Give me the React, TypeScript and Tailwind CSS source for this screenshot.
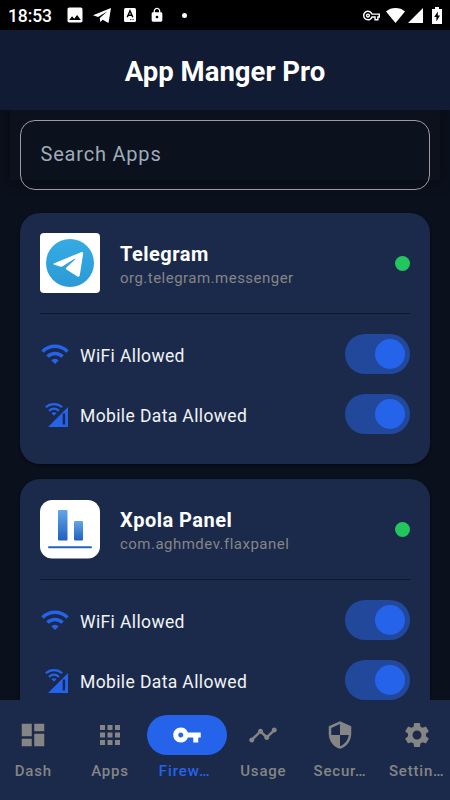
import type { ReactNode } from 'react';
import {
  MdApps,
  MdDashboard,
  MdImage,
  MdLock,
  MdOutlineVpnKey,
  MdSecurity,
  MdSettings,
  MdTimeline,
  MdVpnKey,
  MdWifi,
} from 'react-icons/md';

const tabs = [
  { label: 'Dash', icon: MdDashboard },
  { label: 'Apps', icon: MdApps },
  { label: 'Firew…', icon: MdVpnKey, active: true },
  { label: 'Usage', icon: MdTimeline },
  { label: 'Secur…', icon: MdSecurity },
  { label: 'Settin…', icon: MdSettings },
];

function StatusBar() {
  return (
    <div className="flex h-[30px] shrink-0 items-center bg-black text-white">
      <span className="ml-2 w-[56px] pt-[2px] text-[17.5px] leading-[29px] font-medium tracking-[-0.1px]">18:53</span>
      <MdImage className="ml-[1px] h-5 w-5" />
      <svg className="ml-2 h-[15px] w-[18px]" viewBox="0 0 18 15" fill="currentColor">
        <path d="M0 7.2 18 0 15.5 15 9.8 11.8 7.2 14 6.8 10 14.5 3.2 5 9z" />
      </svg>
      <svg className="ml-[13px] h-[14px] w-3" viewBox="0 0 12 14">
        <rect width="12" height="14" rx="1.5" fill="#fff" />
        <path d="M3.2 9.2 6 2.8l2.8 6.4M4.2 7.2h3.6" fill="none" stroke="#000" strokeWidth="1.4" />
        <path d="M6 11.6h4" stroke="#000" strokeWidth="0.8" strokeDasharray="1 0.6" />
      </svg>
      <MdLock className="ml-[13px] h-4 w-4" />
      <span className="ml-[17px] h-[5px] w-[5px] rounded-full bg-white" />
      <MdOutlineVpnKey className="ml-auto h-[17px] w-[17px]" />
      <svg className="ml-[6px] h-[15px] w-[19px]" viewBox="0 0 19 15" fill="currentColor">
        <path d="M9.5 15 0 3.4C5.2-1.1 13.8-1.1 19 3.4z" />
      </svg>
      <svg className="ml-[3px] h-[15px] w-[15px]" viewBox="0 0 15 15" fill="currentColor">
        <path d="M15 0v15H0z" />
      </svg>
      <svg className="mr-2 ml-[9px] h-[17px] w-[10px]" viewBox="0 0 10 17">
        <path d="M3 0h4v2h3v15H0V2h3z" fill="#fff" />
        <path d="M5.8 4.5 2.2 10h2.2v4.5L8 8.5H5.8z" fill="#000" />
      </svg>
    </div>
  );
}

function TelegramLogo() {
  return (
    <svg className="h-[60px] w-[60px]" viewBox="0 0 60 60">
      <defs>
        <linearGradient id="tg" x1="0" y1="0" x2="0" y2="1">
          <stop offset="0" stopColor="#36abe3" />
          <stop offset="1" stopColor="#2b9ad5" />
        </linearGradient>
      </defs>
      <rect width="60" height="60" rx="4" fill="#fff" />
      <circle cx="30" cy="30" r="24" fill="url(#tg)" />
      <path
        d="M14.3 30.3 41 19.2c1.5-.5 2.4.2 2.1 2L39.8 42c-.3 1.8-1.4 2.2-2.8 1.3l-10.2-6.6c-1.1-.8-1.1-1.6-.1-2.5l8.3-7.6c.7-.8 0-1.1-.9-.5l-11 7c-1 .6-2 .7-3.2.3l-5.4-1.6c-1.3-.5-1.3-1-.2-1.5z"
        fill="#fff"
      />
    </svg>
  );
}

function XpolaLogo() {
  return (
    <svg className="h-[60px] w-[60px]" viewBox="0 0 60 60">
      <defs>
        <linearGradient id="bar" x1="0" y1="0" x2="0" y2="1">
          <stop offset="0" stopColor="#64a6e6" />
          <stop offset="1" stopColor="#1e60bf" />
        </linearGradient>
      </defs>
      <rect y="1" width="60" height="58.5" rx="12" fill="#fff" />
      <rect x="18" y="11" width="9.5" height="30.5" rx="1" fill="url(#bar)" />
      <rect x="34" y="22" width="9" height="19.5" rx="1" fill="url(#bar)" />
      <rect x="8" y="47.3" width="44" height="2" rx="1" fill="#2563c0" />
    </svg>
  );
}

function MobileDataIcon() {
  return (
    <svg className="mt-[3px] h-[30px] w-[30px]" viewBox="0 0 30 30">
      <path d="M28 6v20H8z" fill="#2563eb" />
      <path d="M23.9 12.5v11" stroke="#1b2a4b" strokeWidth="2.4" />
      <g fill="none" stroke="#2563eb" strokeWidth="2.2">
        <path d="M5.8 6.3c4.7-4.2 11.7-4.2 16.4 0" />
        <path d="M9 9.8c3-2.5 7-2.5 10 0" />
      </g>
      <path d="M11.4 12.1c1.6-1.2 3.6-1.2 5.2 0L14 14.7z" fill="#2563eb" />
    </svg>
  );
}

function Toggle() {
  return (
    <div className="flex h-10 w-[65px] items-center justify-end rounded-full bg-[#22489c] p-[5px]">
      <span className="h-[30px] w-[30px] rounded-full bg-[#2563eb]" />
    </div>
  );
}

function PermissionRow({ icon, label }: { icon: ReactNode; label: string }) {
  return (
    <div className="flex h-10 items-center">
      <span className="w-10 text-[#2563eb]">{icon}</span>
      <span className="flex-1 pt-[4px] text-[17.5px] tracking-[0.38px] text-[#f1f3f6]">{label}</span>
      <Toggle />
    </div>
  );
}

function AppCard({ logo, name, pkg }: { logo: ReactNode; name: string; pkg: string }) {
  return (
    <div className="h-[251px] shrink-0 rounded-[20px] bg-[#1b2a4b] px-5 pt-5 shadow-[0_1px_3px_rgba(0,0,0,0.5)]">
      <div className="flex h-[60px] items-center">
        {logo}
        <div className="ml-5 flex-1 pt-[5px]">
          <div className="text-[20px] leading-6 font-bold tracking-[0.48px] text-white">{name}</div>
          <div className="text-[15px] leading-6 tracking-[0.48px] text-[#858585]">{pkg}</div>
        </div>
        <span className="h-[15px] w-[15px] rounded-full bg-[#22c55e]" />
      </div>
      <div className="mt-5 h-px bg-[#0d1830]" />
      <div className="mt-5 flex flex-col gap-5">
        <PermissionRow icon={<MdWifi className="h-[30px] w-[30px]" />} label="WiFi Allowed" />
        <PermissionRow icon={<MobileDataIcon />} label="Mobile Data Allowed" />
      </div>
    </div>
  );
}

function BottomNav() {
  return (
    <nav className="grid h-[100px] shrink-0 grid-cols-[repeat(6,76.7px)] justify-center bg-[#1b2a4b] pt-[15px]">
      {tabs.map(({ label, icon: Icon, active }) => (
        <div key={label} className={`flex flex-col items-center ${active ? 'text-[#2563eb]' : 'text-[#858585]'}`}>
          <div
            className={`flex h-10 w-20 items-center justify-center rounded-full ${active ? 'bg-[#2563eb] text-white' : ''}`}
          >
            <Icon className="h-[30px] w-[30px]" />
          </div>
          <span
            className={`mt-[6px] text-[15px] leading-5 font-medium ${active ? 'pr-1 tracking-[0.95px]' : 'tracking-[0.8px]'}`}
          >
            {label}
          </span>
        </div>
      ))}
    </nav>
  );
}

export default function App() {
  return (
    <div className="flex h-[800px] w-[450px] flex-col overflow-hidden bg-[#0a101c] font-['Roboto',sans-serif]">
      <StatusBar />
      <header className="flex h-20 shrink-0 items-center justify-center bg-[#111b33] pt-[4px] text-[27.5px] font-bold text-white">
        App Manger Pro
      </header>
      <main className="flex min-h-0 flex-1 flex-col overflow-hidden">
        <div className="mx-[10px] h-[70px] shrink-0 bg-[#0b121d] px-[10px] pt-[10px] shadow-[0_0_12px_rgba(0,0,0,0.5)]">
          <div className="flex h-[70px] items-center rounded-[15px] border border-[#a09a9f] px-[19.5px] pb-[2px] text-[20px] tracking-[0.8px] text-[#a0aaba]">
            Search Apps
          </div>
        </div>
        <div className="mt-[33px] flex flex-col gap-[15px] px-5">
          <AppCard logo={<TelegramLogo />} name="Telegram" pkg="org.telegram.messenger" />
          <AppCard logo={<XpolaLogo />} name="Xpola Panel" pkg="com.aghmdev.flaxpanel" />
        </div>
      </main>
      <BottomNav />
    </div>
  );
}
